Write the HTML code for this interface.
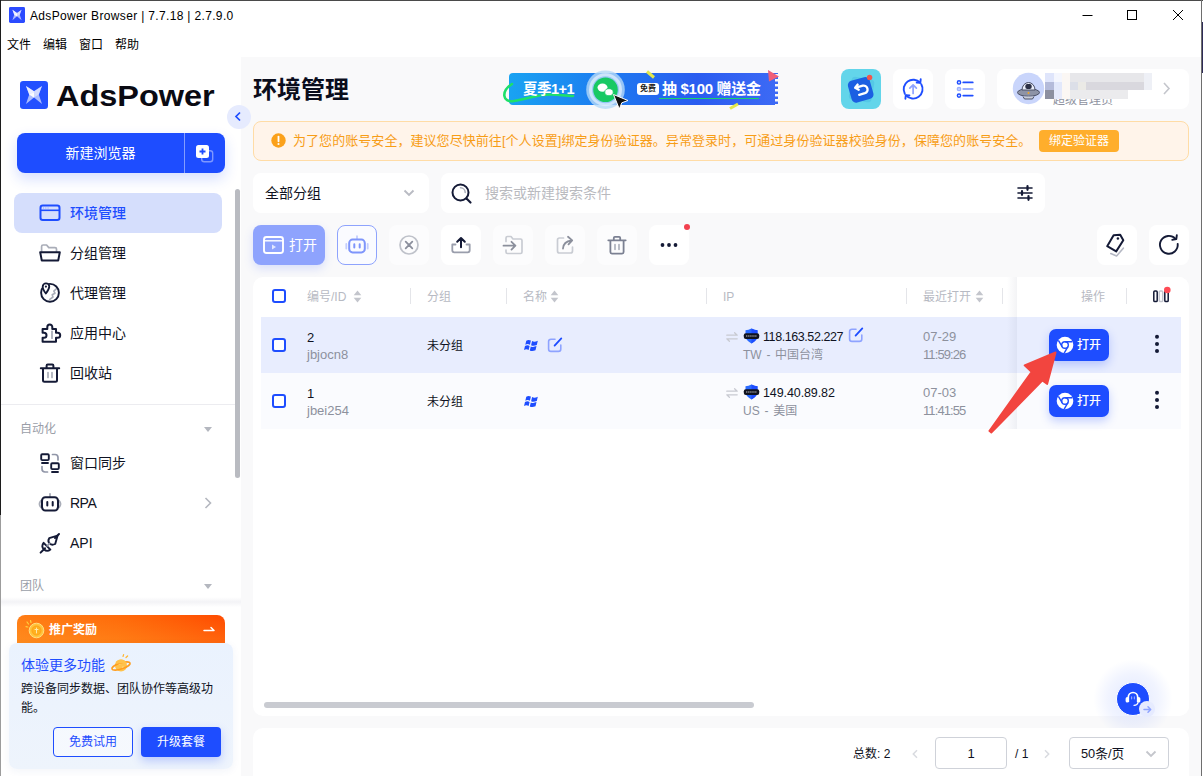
<!DOCTYPE html>
<html lang="zh-CN">
<head>
<meta charset="utf-8">
<title>AdsPower Browser</title>
<style>
*{box-sizing:border-box;margin:0;padding:0}
html,body{width:1203px;height:776px;overflow:hidden;background:#fff}
body{font-family:"Liberation Sans","Noto Sans CJK SC",sans-serif;color:#0f1222;font-size:13px;position:relative}
.abs{position:absolute}
svg{display:block}
/* window chrome */
#win{position:absolute;left:0;top:0;width:1203px;height:776px;overflow:hidden;background:#fff}
#bl{left:0;top:0;width:1px;height:776px;background:linear-gradient(#1c1c1c 0,#1c1c1c 515px,#9c9c9c 515px)}
#bt{left:0;top:0;width:1203px;height:1px;background:#4a4a4a}
#br{left:1201px;top:0;width:1px;height:776px;background:#6e6e6e}
#br2{left:1202px;top:22px;width:1px;height:51px;background:#2e2b57}
#titletxt{left:30px;top:9px;font-size:12px;line-height:15px;color:#000;white-space:nowrap;letter-spacing:.34px}
.menu{top:38px;font-size:12px;line-height:15px;color:#000;white-space:nowrap}
/* sidebar */
#side{left:1px;top:57px;width:240px;height:719px;background:#fff}
#main{left:241px;top:57px;width:960px;height:719px;background:#f9f9fa}
#logotxt{left:56px;top:77px;font-size:29.800px;line-height:38px;font-weight:700;color:#0a0a12;white-space:nowrap;transform:scaleX(1.089);transform-origin:0 50%}
#newbtn{left:17px;top:133px;width:208px;height:40px;border-radius:8px;background:#1e4dff;box-shadow:0 6px 14px rgba(30,77,255,.18)}
#newbtn .t{left:0;top:0;width:167px;height:40px;line-height:40px;text-align:center;color:#fff;font-size:14px}
#newbtn .d{left:167px;top:0;width:1px;height:40px;background:rgba(255,255,255,.45)}
.nav{left:14px;width:208px;height:40px;border-radius:8px}
.nav .t{left:56px;top:0;line-height:40px;font-size:14px;color:#0f1222;white-space:nowrap}
.nav.act{background:#d5defc}
.nav.act .t{color:#1e4dff;font-weight:500}
.nav svg{position:absolute;left:24px;top:8px}
.sect{left:20px;font-size:12px;line-height:16px;color:#9a9ea8}
.caret{width:0;height:0;border-left:4px solid transparent;border-right:4px solid transparent;border-top:5px solid #b4b7bf}

/* promo */
#pshadow{left:1px;top:597px;width:240px;height:10px;background:linear-gradient(#fff,#f3f3f6 50%,#fff)}
#phead{left:17px;top:615px;width:208px;height:36px;border-radius:8px 8px 0 0;background:linear-gradient(180deg,rgba(255,190,60,0) 0%,rgba(255,190,60,.30) 100%),linear-gradient(90deg,#ff7c14 0%,#ff6a0a 50%,#ff4b00 100%)}
#phead .t{left:32px;top:7px;font-size:12px;line-height:16px;font-weight:700;color:#fff}
#pcard{left:9px;top:643px;width:224px;height:126px;border-radius:8px;background:linear-gradient(180deg,#eaf2fe,#eef4fc);box-shadow:0 2px 8px rgba(40,70,160,.06)}
#pcard .h{left:12px;top:12px;font-size:14px;line-height:20px;color:#1e4dff;white-space:nowrap}
#pcard .p{left:12px;top:37px;width:196px;font-size:12px;line-height:18.500px;color:#0f1222}
.pb{top:84px;width:80px;height:30px;border-radius:4px;font-size:12px;line-height:28px;text-align:center}
#pb1{left:44px;border:1px solid #1e4dff;color:#1e4dff;background:rgba(255,255,255,.45)}
#pb2{left:132px;background:#1e4dff;color:#fff;line-height:30px;box-shadow:0 4px 10px rgba(30,77,255,.25)}

/* header */
#ptitle{left:253px;top:73px;font-size:24px;line-height:34px;font-weight:700;color:#0a0d1c;white-space:nowrap}
#collapse{left:227px;top:105px;width:24px;height:24px;border-radius:50%;background:#e6ebfe}
#banner{left:509px;top:73px;width:269px;height:32px;border-radius:4px 0 0 4px;background:linear-gradient(90deg,#19a3f2 0%,#1d7cf0 35%,#2a5cf0 70%,#3d6af5 100%);overflow:visible}
#banner .a{left:14px;top:6px;font-size:14.500px;line-height:20px;font-weight:700;color:#fff;white-space:nowrap;letter-spacing:-.5px}
#banner .b{left:153px;top:5px;font-size:15px;line-height:22px;font-weight:700;color:#fff;white-space:nowrap;letter-spacing:-.3px}
#banner .tag{left:128px;top:10px;width:22px;height:12px;border-radius:3px;background:#fff;color:#1a1a1a;font-size:8px;line-height:12px;text-align:center;font-weight:700}
.hb{top:69px;width:40px;height:40px;border-radius:8px;background:#fff}
#user{left:997px;top:69px;width:192px;height:40px;border-radius:8px;background:#fff;overflow:hidden}
#user .role{left:56px;top:24px;font-size:12px;line-height:14px;color:#8f93a0;white-space:nowrap}
#alert{left:253px;top:121px;width:936px;height:40px;border:1px solid #ffdca6;border-radius:8px;background:#fff4ea}
#alert .t{left:39px;top:0;letter-spacing:.055px;font-size:13px;line-height:38px;color:#f79d16;white-space:nowrap}
#alert .btn{left:785px;top:8px;width:80px;height:22px;border-radius:4px;background:#ffae2c;color:#fff;font-size:12px;line-height:22px;text-align:center}
#sel{left:253px;top:173px;width:176px;height:40px;border-radius:8px;background:#fff}
#sel .t{left:12px;top:0;line-height:40px;font-size:14px;color:#0f1222}
#search{left:441px;top:173px;width:604px;height:40px;border-radius:8px;background:#fff}
#search .t{left:44px;top:0;line-height:40px;font-size:14px;color:#b9babf}
/* toolbar */
.tb{top:225px;width:40px;height:40px;border-radius:8px;background:#fff}
.tb.dis{background:rgba(255,255,255,.55)}
.tb svg{position:absolute;left:8px;top:8px}
#topen{left:253px;top:225px;width:72px;height:40px;border-radius:8px;background:#8ea3fd;box-shadow:0 4px 10px rgba(80,110,255,.18)}
#topen .t{left:36px;top:0;line-height:40px;font-size:14px;color:#fff}

/* table */
#tpanel{left:253px;top:277px;width:936px;height:439px;border-radius:10px;background:#fff;overflow:hidden}
.th{top:287px;font-size:12px;line-height:20px;color:#b7bac3;white-space:nowrap}
.vd{top:288px;width:1px;height:16px;background:#e4e5e9}
.row{left:261px;width:920px;height:56px}
.cb{left:272px;width:14px;height:14px;border:2px solid #1e4dff;border-radius:3px;background:#fff}
.c1{font-size:13px;line-height:18px;color:#0f1222;white-space:nowrap}
.c2{font-size:13px;line-height:18px;color:#8d919d;white-space:nowrap}
.c3{font-size:12px;line-height:18px;color:#0f1222;white-space:nowrap}
.c4{font-size:12px;line-height:18px;color:#8d919d;white-space:nowrap}
.tm{font-size:13px;line-height:18px;color:#8d919d;white-space:nowrap}
.tm2{letter-spacing:-.9px}
.loc{word-spacing:1.400px;margin-top:1px}
.ip{font-size:12.500px;line-height:18px;color:#0f1222;white-space:nowrap;letter-spacing:-.1px}
#fixcol{left:1017px;top:277px;width:172px;height:439px;background:#fff;border-radius:0 10px 10px 0}
#fixsh{left:1007px;top:277px;width:10px;height:152px;background:linear-gradient(90deg,rgba(20,30,70,0),rgba(20,30,70,.05))}
.ob{left:1049px;width:60px;height:32px;border-radius:7px;background:#1e4dff;box-shadow:0 4px 10px rgba(30,77,255,.25)}
.ob .t{left:28px;top:0;line-height:32px;font-size:12px;color:#fff;font-weight:500}
/* footer */
#fpanel{left:253px;top:728px;width:936px;height:60px;border-radius:10px;background:#fff}
.ft{font-size:12px;line-height:18px;color:#0f1222;white-space:nowrap}
.fi{top:737px;height:32px;border:1px solid #cfd2d9;border-radius:4px;background:#fff}
</style>
</head>
<body>
<div id="win">
  <!-- title bar -->
  <div class="abs" id="bt"></div><div class="abs" id="bl"></div><div class="abs" id="br"></div><div class="abs" id="br2"></div>
  <svg class="abs" style="left:9px;top:7px" width="16" height="16" viewBox="0 0 28 28"><rect width="28" height="28" rx="2.500" fill="#2b4bff"/><path d="M6 5L14 10.300L22 5L18.800 13.600L22 23L14 16.400L6 23L9.200 13.600Z" fill="#fff" opacity=".62"/><path d="M6 5L14 10.300L14 16.400L9.200 13.600Z" fill="#fff" opacity=".75"/><path d="M22 5L14 10.300L14 16.400L18.800 13.600Z" fill="#fff" opacity=".45"/><path d="M9.200 13.600L14 11.800L14 16.400Z" fill="#fff" opacity=".8"/></svg>
  <div class="abs" id="titletxt">AdsPower Browser | 7.7.18 | 2.7.9.0</div>
  <svg class="abs" style="left:1080px;top:8px" width="112" height="16" viewBox="0 0 112 16" fill="none" stroke="#000" stroke-width="1"><path d="M2.500 7.500H12.500"/><rect x="47.500" y="2.500" width="9" height="9"/><path d="M93 2L103 12M103 2L93 12"/></svg>
  <div class="abs menu" style="left:7px">文件</div>
  <div class="abs menu" style="left:43px">编辑</div>
  <div class="abs menu" style="left:79px">窗口</div>
  <div class="abs menu" style="left:115px">帮助</div>

  <div class="abs" id="side"></div>
  <div class="abs" id="main"></div>


  <!-- HEADER -->
  <div class="abs" id="ptitle">环境管理</div>
  <div class="abs" id="collapse"><svg class="abs" style="left:7px;top:6px" width="8" height="11" viewBox="0 0 8 11" fill="none" stroke="#1e4dff" stroke-width="1.700"><path d="M6 1.500L2 5.500L6 9.500"/></svg></div>
  <div class="abs" id="banner">
    <svg class="abs" style="left:-12px;top:-6px" width="292" height="46" viewBox="0 0 292 46" fill="none"><path d="M15 17C4 24 5 36 17 34C32 31.500 40 27 56 27.500C64 28 70 29 76 29" stroke="#1de06a" stroke-width="2.600" stroke-linecap="round"/><path d="M162 31.500H262" stroke="#19d46a" stroke-width="1.200"/><path d="M279.500 7V39" stroke="#f9f9fa" stroke-width="3" stroke-dasharray="2.500 2.500"/><circle cx="108.500" cy="22.700" r="19.300" fill="#b5d9f8" opacity=".8"/><circle cx="108.500" cy="22.700" r="15" fill="none" stroke="#e4f1fd" stroke-width="3" opacity=".7"/><circle cx="108.500" cy="22.700" r="12.300" fill="#17c964"/><ellipse cx="105.500" cy="20.600" rx="5" ry="4.200" fill="#fff"/><ellipse cx="112" cy="25.200" rx="4.200" ry="3.500" fill="#fff" stroke="#17c964" stroke-width=".8"/><path d="M116.500 27.500L131 33.500L124.800 35.800L122.300 42Z" fill="#111" stroke="#fff" stroke-width="1"/><path d="M271 3L282 9.500L272 14.500Z" fill="#f0607a"/><path d="M150 4.500L157 10.500" stroke="#e4e84a" stroke-width="3"/><path d="M233 41.500L241 37" stroke="#e4e84a" stroke-width="3"/></svg>
    <div class="abs a">夏季1+1</div>
    <div class="abs tag">免费</div>
    <div class="abs b">抽 $100 赠送金</div>
  </div>
  <div class="abs hb" style="left:841px;background:#63d5ea;overflow:hidden">
    <svg class="abs" style="left:0;top:0" width="40" height="40" viewBox="0 0 40 40"><rect x="9" y="9" width="23" height="23" rx="4" fill="#55c8e6" transform="rotate(10 20 21)"/><rect x="8.500" y="9.500" width="22.500" height="22.500" rx="4.500" fill="#1b5fe2" transform="rotate(-16 20 21)"/><path d="M14.200 18.800L21.800 16.700A3.900 3.900 0 0 1 23.900 24.200L18.200 25.800M14.200 18.800L16.600 15.600M14.200 18.800L17.700 20.700" fill="none" stroke="#fff" stroke-width="2.400" stroke-linecap="round" stroke-linejoin="round"/><circle cx="28.600" cy="8.400" r="2.700" fill="#f2564d"/></svg>
  </div>
  <div class="abs hb" style="left:893px"><svg class="abs" style="left:8px;top:8px" width="24" height="24" viewBox="0 0 24 24" fill="none" stroke="#1e4dff" stroke-width="1.900" stroke-linecap="round" stroke-linejoin="round"><path d="M3.800 16.700A9.500 9.500 0 0 1 19.100 5.700M20.300 7.300A9.500 9.500 0 0 1 5 18.400"/><path d="M19.700 2.300L19.300 5.900L15.700 5.500M4.400 21.700L4.800 18.100L8.400 18.500"/><path d="M12.100 16.500V8M8.800 11.200L12.100 7.900L15.400 11.200" stroke="#8ea3ff" stroke-width="1.700"/></svg></div>
  <div class="abs hb" style="left:945px"><svg class="abs" style="left:8px;top:8px" width="24" height="24" viewBox="0 0 24 24" fill="none" stroke="#1e4dff" stroke-width="1.900" stroke-linecap="round"><path d="M10.300 5.400H19.700M10.300 18.600H19.700"/><path d="M10.300 12H19.700" stroke="#9db0ff"/><circle cx="6" cy="5.400" r="1.600" stroke-width="1.500"/><circle cx="6" cy="12" r="1.600" stroke-width="1.500" stroke="#9db0ff" fill="#dfe5ff"/><circle cx="6" cy="18.600" r="1.600" stroke-width="1.500"/></svg></div>
  <div class="abs" id="user">
    <div class="abs role">超级管理员</div>
    <svg class="abs" style="left:0;top:0" width="192" height="40" viewBox="0 0 192 40"><circle cx="31.500" cy="19.500" r="15.700" fill="#c9d5fb"/><ellipse cx="31.500" cy="23.500" rx="11" ry="3.800" fill="#8d93a6" stroke="#4b5066" stroke-width="1"/><path d="M25 21A6.500 7.500 0 0 1 38 21Z" fill="#e9edf8" stroke="#4b5066" stroke-width="1"/><rect x="28.300" y="15" width="6.400" height="5" rx="2" fill="#2b2f45"/><path d="M26 27.500L27.500 30H35.500L37 27.500" fill="#c8ccd8" stroke="#4b5066" stroke-width="1"/><circle cx="31.500" cy="24" r="1" fill="#f5a623"/>
      <g shape-rendering="crispEdges"><rect x="48" y="4" width="107" height="26" fill="#f6f6f8"/><rect x="48" y="4" width="9" height="9" fill="#dfe5fb"/><rect x="48" y="13" width="9" height="8" fill="#b4bbda"/><rect x="48" y="21" width="9" height="9" fill="#8d90a0"/><rect x="57" y="4" width="8" height="9" fill="#f4f6fe"/><rect x="57" y="13" width="8" height="8" fill="#e2e8fb"/><rect x="57" y="21" width="8" height="9" fill="#e6eafb"/><rect x="65" y="4" width="8" height="26" fill="#fbf7f4"/><rect x="73" y="4" width="74" height="9" fill="#e7e7ea"/><rect x="73" y="13" width="16" height="8" fill="#dcdfe8"/><rect x="81" y="13" width="8" height="8" fill="#ebeae6"/><rect x="89" y="13" width="58" height="8" fill="#d9d8de"/><rect x="73" y="21" width="58" height="9" fill="#ebebed"/><rect x="131" y="21" width="24" height="9" fill="#fff"/><rect x="147" y="4" width="8" height="17" fill="#eef0f6"/></g>
      <path d="M167 14L172 19.500L167 25" fill="none" stroke="#c4c6cc" stroke-width="1.600"/></svg>
  </div>
  <div class="abs" id="alert">
    <svg class="abs" style="left:17px;top:11px" width="15" height="15" viewBox="0 0 15 15"><circle cx="7.500" cy="7.500" r="7.200" fill="#fba11b"/><path d="M7.500 3.600V8.300" stroke="#fff" stroke-width="1.800" stroke-linecap="round"/><circle cx="7.500" cy="11" r="1.050" fill="#fff"/></svg>
    <div class="abs t">为了您的账号安全，建议您尽快前往[个人设置]绑定身份验证器。异常登录时，可通过身份验证器校验身份，保障您的账号安全。</div>
    <div class="abs btn">绑定验证器</div>
  </div>
  <div class="abs" id="sel"><div class="abs t">全部分组</div><svg class="abs" style="left:150px;top:16px" width="12" height="8" viewBox="0 0 12 8" fill="none" stroke="#b9bbc3" stroke-width="1.900"><path d="M1.500 1.500L6 6L10.500 1.500"/></svg></div>
  <div class="abs" id="search"><svg class="abs" style="left:9px;top:9px" width="24" height="24" viewBox="0 0 24 24" fill="none" stroke-linecap="round"><circle cx="10.500" cy="10.500" r="8" stroke="#141a36" stroke-width="2"/><path d="M16.500 16.500L20.500 20.500" stroke="#141a36" stroke-width="2.200"/><path d="M10.500 5.800A4.700 4.700 0 0 1 15.200 10.500" stroke="#a9adb8" stroke-width="1.500"/></svg><div class="abs t">搜索或新建搜索条件</div>
    <svg class="abs" style="left:575px;top:11px" width="18" height="18" viewBox="0 0 18 18" fill="none" stroke="#141a36" stroke-width="1.600" stroke-linecap="round"><path d="M2 4H16M2 9H16M2 14H16"/><path d="M11.500 2.200V5.800M6 7.200V10.800M12.500 12.200V15.800" stroke-width="2.200"/></svg></div>
  <!-- TOOLBAR -->
  <div class="abs" id="topen"><svg class="abs" style="left:9px;top:9px" width="24" height="22" viewBox="0 0 24 22" fill="none" stroke="#fff" stroke-width="1.900" stroke-linejoin="round"><rect x="2" y="3" width="19" height="16" rx="2.500"/><path d="M2 6.800H21" stroke-width="1.400"/><path d="M10 10.500L14 13L10 15.500Z" fill="#fff" stroke="none" opacity=".75"/></svg><div class="abs t">打开</div></div>
  <div class="abs tb" style="left:337px;border:1px solid #8ea3fd;background:#fafbff"><svg style="left:7px;top:7px" width="24" height="24" viewBox="0 0 24 24" fill="none" stroke-linejoin="round" stroke-linecap="round"><path d="M1.300 11V15.500M22.700 11V15.500M12 3.200V6" stroke="#c3cdfd" stroke-width="1.800"/><rect x="4.200" y="6.600" width="15.600" height="12.800" rx="3.400" stroke="#7e95fb" stroke-width="2"/><path d="M9.300 11.200V14.600M14.700 11.200V14.600" stroke="#7e95fb" stroke-width="2"/></svg></div>
  <div class="abs tb dis" style="left:389px"><svg width="24" height="24" viewBox="0 0 24 24" fill="none" stroke="#bfc2ca" stroke-width="1.700" stroke-linecap="round"><circle cx="12" cy="12" r="9"/><path d="M8.700 8.700L15.300 15.300M15.300 8.700L8.700 15.300" stroke="#8b8f9c" stroke-width="1.800"/></svg></div>
  <div class="abs tb" style="left:441px"><svg width="24" height="24" viewBox="0 0 24 24" fill="none" stroke-linecap="round" stroke-linejoin="round"><path d="M3.300 11.500V17.300Q3.300 19.300 5.300 19.300H18.700Q20.700 19.300 20.700 17.300V11.500H17.500M3.300 11.500H6.500" stroke="#9a9eac" stroke-width="1.800"/><path d="M12 14.300V5.500M8.200 8.800L12 5L15.800 8.800" stroke="#141a36" stroke-width="2"/></svg></div>
  <div class="abs tb dis" style="left:493px"><svg width="24" height="24" viewBox="0 0 24 24" fill="none" stroke-linecap="round" stroke-linejoin="round"><path d="M5 8.500V5Q5 3.500 6.500 3.500H10L12 6H19.500Q21 6 21 7.500V19Q21 20.500 19.500 20.500H6.500Q5 20.500 5 19V17" stroke="#c9ccd3" stroke-width="1.700"/><path d="M2.500 12.700H14M10.500 8.800L14.400 12.700L10.500 16.600" stroke="#8b8f9c" stroke-width="1.800"/></svg></div>
  <div class="abs tb dis" style="left:545px"><svg width="24" height="24" viewBox="0 0 24 24" fill="none" stroke-linecap="round" stroke-linejoin="round"><path d="M10.500 5H6.500Q4.500 5 4.500 7V18Q4.500 20 6.500 20H17.500Q19.500 20 19.500 18V14" stroke="#c9ccd3" stroke-width="1.700"/><path d="M10 15.500Q10.500 8.500 18.500 7.500M15 3.800L19.200 7.400L15.500 11.300" stroke="#8b8f9c" stroke-width="1.800"/></svg></div>
  <div class="abs tb dis" style="left:597px"><svg width="24" height="24" viewBox="0 0 24 24" fill="none" stroke-linejoin="round" stroke-linecap="round"><path d="M10 11.500V16.500M14 11.500V16.500" stroke="#a9adb8" stroke-width="1.600"/><path d="M3.300 7.300H20.700M8.800 7V4.900Q8.800 3.800 9.900 3.800H14.100Q15.200 3.800 15.200 4.900V7M5.400 7.500V19.100Q5.400 20.600 6.900 20.600H17.100Q18.600 20.600 18.600 19.100V7.500" stroke="#7b8092" stroke-width="1.800"/></svg></div>
  <div class="abs tb" style="left:649px"><svg width="24" height="24" viewBox="0 0 24 24" fill="#141a36"><circle cx="5.500" cy="12" r="1.900"/><circle cx="12" cy="12" r="1.900"/><circle cx="18.500" cy="12" r="1.900"/></svg></div>
  <div class="abs" style="left:684px;top:224px;width:6px;height:6px;border-radius:50%;background:#f2414f"></div>
  <div class="abs tb" style="left:1097px"><svg width="24" height="24" viewBox="0 0 24 24" fill="none" stroke-linejoin="round" stroke-linecap="round"><path d="M5.800 20.600L11.600 23L18.300 15.200" stroke="#b4b7c3" stroke-width="1.600"/><path d="M8.600 2.200L15.200 1.800L18.300 7.200L11.200 18.400L2.200 13.200Z" stroke="#141a36" stroke-width="2"/><circle cx="12.900" cy="5.600" r="1.250" fill="#141a36"/></svg></div>
  <div class="abs tb" style="left:1149px"><svg width="24" height="24" viewBox="0 0 24 24" fill="none" stroke="#141a36" stroke-width="1.900" stroke-linecap="round" stroke-linejoin="round"><path d="M20.700 10.900A8.900 8.900 0 1 1 18.500 5.900"/><path d="M15.200 6.900L19.300 6L19.800 2.300"/></svg></div>

  <!-- TABLE -->
  <div class="abs" id="tpanel"></div>
  <div class="abs cb" style="top:289px"></div>
  <div class="abs th" style="left:307px">编号/ID</div><svg class="abs" style="left:353px;top:290px" width="9" height="13" viewBox="0 0 9 13" fill="#c3c5cc"><path d="M4.500 .6L8.300 5.200H.7Z"/><path d="M4.500 12.400L8.300 7.800H.7Z"/></svg>
  <div class="abs vd" style="left:410px"></div>
  <div class="abs th" style="left:427px">分组</div>
  <div class="abs vd" style="left:506px"></div>
  <div class="abs th" style="left:523px">名称</div><svg class="abs" style="left:550px;top:290px" width="9" height="13" viewBox="0 0 9 13" fill="#c3c5cc"><path d="M4.500 .6L8.300 5.200H.7Z"/><path d="M4.500 12.400L8.300 7.800H.7Z"/></svg>
  <div class="abs vd" style="left:706px"></div>
  <div class="abs th" style="left:723px">IP</div>
  <div class="abs vd" style="left:906px"></div>
  <div class="abs th" style="left:923px">最近打开</div><svg class="abs" style="left:975px;top:290px" width="9" height="13" viewBox="0 0 9 13" fill="#c3c5cc"><path d="M4.500 .6L8.300 5.200H.7Z"/><path d="M4.500 12.400L8.300 7.800H.7Z"/></svg>
  <div class="abs vd" style="left:1002px"></div>
  <div class="abs row" style="top:317px;background:#e8edfe"></div>
  <div class="abs cb" style="top:338px"></div>
  <div class="abs c1" style="left:307px;top:329px">2</div><div class="abs c2" style="left:307px;top:346px">jbjocn8</div>
  <div class="abs c3" style="left:427px;top:337px">未分组</div>
  <svg class="abs" style="left:524px;top:339px" width="15" height="13" viewBox="0 0 15 13" fill="#1e4dff"><path d="M2.300 1.700Q4.500 .3 6.900 1.600L5.900 5.700Q3.600 4.400 1.300 5.800Z"/><path d="M8.100 2.100Q10.400 3.300 13.800 1.800L12.800 5.900Q9.600 7.400 7.100 6.200Z"/><path d="M1 7Q3.300 5.600 5.600 6.900L4.600 11Q2.300 9.700 0 11.100Z"/><path d="M6.800 7.400Q9.200 8.600 12.500 7.100L11.500 11.200Q8.300 12.700 5.800 11.500Z"/></svg>
  <svg class="abs" style="left:547px;top:337px" width="16" height="16" viewBox="0 0 16 16" fill="none" stroke-linecap="round" stroke-linejoin="round"><path d="M8 2.200H4Q1.600 2.200 1.600 4.600V12Q1.600 14.400 4 14.400H11.400Q13.800 14.400 13.800 12V8" stroke="#8ea3ff" stroke-width="1.600"/><path d="M7.600 8.600L14.300 1.400" stroke="#1e4dff" stroke-width="1.800"/></svg>
  <svg class="abs" style="left:726px;top:332px" width="12" height="10" viewBox="0 0 12 10" fill="none" stroke="#c8cad1" stroke-width="1.300" stroke-linecap="round" stroke-linejoin="round"><path d="M.8 3.200H11.200L8.600 .8M11.200 6.800H.8L3.400 9.200"/></svg>
  <svg class="abs" style="left:743px;top:328px" width="17" height="16" viewBox="0 0 17 16"><path d="M8.500 .6Q11.500 2.200 14.500 2.300V8Q14.500 12.500 8.500 15.400Q2.500 12.500 2.500 8V2.300Q5.500 2.200 8.500 .6Z" fill="#2a6bff"/><path d="M8.500 .6Q11.500 2.200 14.500 2.300V8Q14.500 12.500 8.500 15.400Z" fill="#1e4dff"/><rect x=".8" y="5.300" width="15.400" height="5.600" rx="2" fill="#10131f"/><path d="M3 8H14" stroke="#fff" stroke-width=".9" stroke-dasharray="1.400 .7" opacity=".85"/></svg>
  <div class="abs ip" style="left:763px;top:328px;letter-spacing:-.42px">118.163.52.227</div>
  <svg class="abs" style="left:848px;top:327px" width="16" height="16" viewBox="0 0 16 16" fill="none" stroke-linecap="round" stroke-linejoin="round"><path d="M8 2.200H4Q1.600 2.200 1.600 4.600V12Q1.600 14.400 4 14.400H11.400Q13.800 14.400 13.800 12V8" stroke="#8ea3ff" stroke-width="1.600"/><path d="M7.600 8.600L14.300 1.400" stroke="#1e4dff" stroke-width="1.800"/></svg>
  <div class="abs c4 loc" style="left:743px;top:345px">TW - 中国台湾</div>
  <div class="abs tm" style="left:923px;top:328px">07-29</div><div class="abs tm tm2" style="left:923px;top:346px">11:59:26</div>

  <div class="abs row" style="top:373px;background:#fafbfe"></div>
  <div class="abs cb" style="top:394px"></div>
  <div class="abs c1" style="left:307px;top:385px">1</div><div class="abs c2" style="left:307px;top:402px">jbei254</div>
  <div class="abs c3" style="left:427px;top:393px">未分组</div>
  <svg class="abs" style="left:524px;top:395px" width="15" height="13" viewBox="0 0 15 13" fill="#1e4dff"><path d="M2.300 1.700Q4.500 .3 6.900 1.600L5.900 5.700Q3.600 4.400 1.300 5.800Z"/><path d="M8.100 2.100Q10.400 3.300 13.800 1.800L12.800 5.900Q9.600 7.400 7.100 6.200Z"/><path d="M1 7Q3.300 5.600 5.600 6.900L4.600 11Q2.300 9.700 0 11.100Z"/><path d="M6.800 7.400Q9.200 8.600 12.500 7.100L11.500 11.200Q8.300 12.700 5.800 11.500Z"/></svg>
  <svg class="abs" style="left:726px;top:388px" width="12" height="10" viewBox="0 0 12 10" fill="none" stroke="#c8cad1" stroke-width="1.300" stroke-linecap="round" stroke-linejoin="round"><path d="M.8 3.200H11.200L8.600 .8M11.200 6.800H.8L3.400 9.200"/></svg>
  <svg class="abs" style="left:743px;top:384px" width="17" height="16" viewBox="0 0 17 16"><path d="M8.500 .6Q11.500 2.200 14.500 2.300V8Q14.500 12.500 8.500 15.400Q2.500 12.500 2.500 8V2.300Q5.500 2.200 8.500 .6Z" fill="#2a6bff"/><path d="M8.500 .6Q11.500 2.200 14.500 2.300V8Q14.500 12.500 8.500 15.400Z" fill="#1e4dff"/><rect x=".8" y="5.300" width="15.400" height="5.600" rx="2" fill="#10131f"/><path d="M3 8H14" stroke="#fff" stroke-width=".9" stroke-dasharray="1.400 .7" opacity=".85"/></svg>
  <div class="abs ip" style="left:763px;top:384px">149.40.89.82</div>
  <div class="abs c4 loc" style="left:743px;top:401px">US - 美国</div>
  <div class="abs tm" style="left:923px;top:384px">07-03</div><div class="abs tm tm2" style="left:923px;top:402px">11:41:55</div>

  <div class="abs" id="fixsh"></div>
  <div class="abs" id="fixcol"></div>
  <div class="abs th" style="left:1081px">操作</div>
  <div class="abs vd" style="left:1126px"></div>
  <svg class="abs" style="left:1152px;top:286px" width="20" height="18" viewBox="0 0 20 18" fill="none" stroke="#141a36" stroke-width="1.500"><rect x="1.800" y="5" width="3.400" height="10.600" rx="1.100"/><rect x="7.300" y="5" width="3.400" height="10.600" rx="1.100" stroke="#c5c7d0"/><rect x="12.800" y="5" width="3.400" height="10.600" rx="1.100"/><circle cx="15.300" cy="4" r="3.300" fill="#ff4b55" stroke="none"/></svg>
  <div class="abs" style="left:1017px;top:317px;width:164px;height:56px;background:#e8edfe"></div>
  <div class="abs ob" style="top:329px"><svg class="abs" style="left:7px;top:7px" width="18" height="18" viewBox="0 0 18 18"><circle cx="9" cy="9" r="8.300" fill="#fff"/><circle cx="9" cy="9" r="3.300" fill="none" stroke="#1e4dff" stroke-width="1.400"/><path d="M9 5.700H16.400M6.100 10.700L2.400 4.300M11.900 10.700L8.200 17.100" stroke="#1e4dff" stroke-width="1.400" fill="none"/></svg><div class="abs t">打开</div></div>
  <svg class="abs" style="left:1154px;top:334px" width="6" height="20" viewBox="0 0 6 20" fill="#141a36"><circle cx="3" cy="2.700" r="2"/><circle cx="3" cy="9.900" r="2"/><circle cx="3" cy="17.100" r="2"/></svg>

  <div class="abs" style="left:1017px;top:373px;width:164px;height:56px;background:#fafbfe"></div>
  <div class="abs ob" style="top:385px"><svg class="abs" style="left:7px;top:7px" width="18" height="18" viewBox="0 0 18 18"><circle cx="9" cy="9" r="8.300" fill="#fff"/><circle cx="9" cy="9" r="3.300" fill="none" stroke="#1e4dff" stroke-width="1.400"/><path d="M9 5.700H16.400M6.100 10.700L2.400 4.300M11.900 10.700L8.200 17.100" stroke="#1e4dff" stroke-width="1.400" fill="none"/></svg><div class="abs t">打开</div></div>
  <svg class="abs" style="left:1154px;top:390px" width="6" height="20" viewBox="0 0 6 20" fill="#141a36"><circle cx="3" cy="2.700" r="2"/><circle cx="3" cy="9.900" r="2"/><circle cx="3" cy="17.100" r="2"/></svg>

  <div class="abs" style="left:264px;top:702px;width:490px;height:6px;border-radius:3px;background:#c9cbd1"></div>
  <svg class="abs" style="left:980px;top:340px" width="80" height="100" viewBox="980 340 80 100"><path d="M1055.600 352.400L1047.200 384L1042.300 380.600L991.300 432.600L989.300 430.900L1031.500 371.900L1024.600 365.400Z" fill="#f2453f" stroke="#f2453f" stroke-width="1.800" stroke-linejoin="round"/></svg>
  <!-- support -->
  <div class="abs" style="left:1093px;top:659px;width:80px;height:80px;border-radius:50%;background:radial-gradient(circle,rgba(120,150,255,.22) 0%,rgba(120,150,255,.10) 45%,rgba(120,150,255,0) 70%)"></div>
  <div class="abs" style="left:1116px;top:682px;width:34px;height:34px;border-radius:50%;background:#1e4dff;border:1px solid #fff">
    <svg class="abs" style="left:6px;top:6px" width="20" height="20" viewBox="0 0 20 20" fill="none"><path d="M5.300 13V8.200A4.700 4.700 0 0 1 14.700 8.200V13" stroke="#fff" stroke-width="1.700"/><rect x="2.600" y="8" width="3.400" height="5.600" rx="1.700" fill="#fff"/><rect x="14" y="8" width="3.400" height="5.600" rx="1.700" fill="#fff"/><path d="M8.600 7.800V9.800M11.400 7.800V9.800" stroke="#8ea3ff" stroke-width="1.200" stroke-linecap="round"/><path d="M15 13.500Q14.500 16.300 11 16.300" stroke="#fff" stroke-width="1.300" stroke-linecap="round"/></svg>
  </div>
  <div class="abs" style="left:1139px;top:701px;width:16px;height:16px;border-radius:50%;background:#e6ebff"><svg class="abs" style="left:3.500px;top:3.500px" width="9" height="9" viewBox="0 0 9 9" fill="none" stroke="#8ea3ff" stroke-width="1.500" stroke-linecap="round" stroke-linejoin="round"><path d="M1 4.500H7.500M5 1.800L7.700 4.500L5 7.200"/></svg></div>
  <!-- FOOTER -->
  <div class="abs" id="fpanel"></div>
  <div class="abs ft" style="left:853px;top:745px">总数: 2</div>
  <svg class="abs" style="left:911px;top:749px" width="8" height="10" viewBox="0 0 8 10" fill="none" stroke="#d9dbe0" stroke-width="1.500"><path d="M6 1.300L2.300 5L6 8.700"/></svg>
  <div class="abs fi" style="left:935px;width:72px"></div>
  <div class="abs ft" style="left:935px;top:745px;width:72px;text-align:center;font-size:13px">1</div>
  <div class="abs ft" style="left:1015px;top:745px">/ 1</div>
  <svg class="abs" style="left:1043px;top:749px" width="8" height="10" viewBox="0 0 8 10" fill="none" stroke="#d9dbe0" stroke-width="1.500"><path d="M2 1.300L5.700 5L2 8.700"/></svg>
  <div class="abs fi" style="left:1069px;width:100px"></div>
  <div class="abs ft" style="left:1081px;top:745px;font-size:12.800px">50条/页</div>
  <svg class="abs" style="left:1145px;top:750px" width="12" height="8" viewBox="0 0 12 8" fill="none" stroke="#c4c6cc" stroke-width="1.800"><path d="M1.500 1.500L6 6L10.500 1.500"/></svg>
  <!-- SIDEBAR -->
  <svg class="abs" style="left:20px;top:81px" width="28" height="28" viewBox="0 0 28 28"><rect width="28" height="28" rx="3.200" fill="#2350ff"/><path d="M6 5L14 10.300L22 5L18.800 13.600L22 23L14 16.400L6 23L9.200 13.600Z" fill="#fff" opacity=".62"/><path d="M6 5L14 10.300L14 16.400L9.200 13.600Z" fill="#fff" opacity=".75"/><path d="M22 5L14 10.300L14 16.400L18.800 13.600Z" fill="#fff" opacity=".45"/><path d="M9.200 13.600L14 11.800L14 16.400Z" fill="#fff" opacity=".8"/></svg>
  <div class="abs" id="logotxt">AdsPower</div>

  <div class="abs" id="newbtn"><div class="abs t">新建浏览器</div><div class="abs d"></div>
    <svg class="abs" style="left:178px;top:11px" width="20" height="20" viewBox="0 0 20 20"><rect x="6.700" y="6.700" width="11" height="11" rx="2.500" fill="none" stroke="#7d97ff" stroke-width="1.400"/><rect x="1" y="1" width="13" height="13" rx="2.500" fill="#fff"/><path d="M7.500 4.500V10.500M4.500 7.500H10.500" stroke="#1e4dff" stroke-width="1.800"/></svg>
  </div>

  <div class="abs nav act" style="top:193px"><svg width="24" height="24" viewBox="0 0 24 24" fill="none" stroke="#1e4dff" stroke-width="2"><rect x="2.500" y="4.600" width="19" height="14.400" rx="2.300"/><path d="M2.500 9.300H21.500" stroke-width="1.600"/><path d="M5 7H6M7.300 7H8.300M9.600 7H10.600" stroke-width="1" stroke="#8ea2ff"/></svg><div class="abs t">环境管理</div></div>
  <div class="abs nav" style="top:233px"><svg width="24" height="24" viewBox="0 0 24 24" fill="none" stroke-linejoin="round" stroke-linecap="round"><path d="M3.600 10.500V5.500Q3.600 4 5.100 4H8.600L10.800 6.600H17Q18.500 6.600 18.500 8.100V10.500" stroke="#a9adb8" stroke-width="1.700"/><path d="M2.200 11.200H21.800L20.200 19.600H3.800Z" stroke="#141a36" stroke-width="2"/></svg><div class="abs t">分组管理</div></div>
  <div class="abs nav" style="top:273px"><svg width="24" height="24" viewBox="0 0 24 24" fill="none" stroke-linecap="round" stroke-linejoin="round"><path d="M18 8.200L15.800 10.200L17 12.200L14.200 13.800L15 16L11.800 18.400" stroke="#a9adb8" stroke-width="1.600"/><circle cx="12" cy="11.800" r="8.900" stroke="#141a36" stroke-width="1.900"/><path d="M7.900 12.500C5.900 9.900 4.700 8 4.700 5.700A3.300 3.300 0 0 1 11.300 5.700C11.100 8 9.900 9.900 7.900 12.500Z" stroke="#141a36" stroke-width="1.800" fill="#fff"/><circle cx="7.900" cy="5.600" r="1.100" fill="#141a36"/></svg><div class="abs t">代理管理</div></div>
  <div class="abs nav" style="top:313px"><svg width="24" height="24" viewBox="0 0 24 24" fill="none" stroke-linejoin="round" stroke-linecap="round"><path d="M14 10.300V17.200" stroke="#a9adb8" stroke-width="1.800"/><path d="M4.600 8H9.300V6A2.500 2.500 0 0 1 14.300 6V8H18V11.700H19.700A2.500 2.500 0 0 1 19.700 16.700H18V20.700H4.600V16.700H6A2.500 2.500 0 0 0 6 11.700H4.600Z" stroke="#141a36" stroke-width="2"/></svg><div class="abs t">应用中心</div></div>
  <div class="abs nav" style="top:353px"><svg width="24" height="24" viewBox="0 0 24 24" fill="none" stroke-linejoin="round" stroke-linecap="round"><path d="M10 11.500V16.500M14 11.500V16.500" stroke="#a9adb8" stroke-width="1.700"/><path d="M2.800 7.300H21.200M8.600 7V4.700Q8.600 3.600 9.700 3.600H14.300Q15.400 3.600 15.400 4.700V7M5 7.500V19.300Q5 20.800 6.500 20.800H17.500Q19 20.800 19 19.300V7.500" stroke="#141a36" stroke-width="2"/></svg><div class="abs t">回收站</div></div>
  <div class="abs" style="left:1px;top:404px;width:234px;height:1px;background:#ececf0"></div>
  <div class="abs sect" style="top:421px">自动化</div>
  <div class="abs caret" style="left:204px;top:427px"></div>
  <div class="abs nav" style="top:443px"><svg width="24" height="24" viewBox="0 0 24 24" fill="none" stroke-linejoin="round" stroke-linecap="round"><path d="M14.500 3.500H17Q20 3.500 20 6.500V9M9.500 21H7Q4 21 4 18V15.500" stroke="#9196a8" stroke-width="1.700"/><rect x="3.200" y="3.300" width="7.600" height="5.800" rx="1" stroke="#141a36" stroke-width="1.900"/><path d="M4 12H10" stroke="#141a36" stroke-width="1.900"/><rect x="13.200" y="12.300" width="7.600" height="5.800" rx="1" stroke="#141a36" stroke-width="1.900"/><path d="M14 21H20" stroke="#141a36" stroke-width="1.900"/></svg><div class="abs t">窗口同步</div></div>
  <div class="abs nav" style="top:483px"><svg width="24" height="24" viewBox="0 0 24 24" fill="none" stroke-linejoin="round" stroke-linecap="round"><path d="M3 9.600Q0 13 3 16.400M21 9.600Q24 13 21 16.400M12 2.800V6" stroke="#a9adb8" stroke-width="1.800"/><rect x="4" y="6.300" width="16" height="13.200" rx="3.400" stroke="#141a36" stroke-width="2"/><path d="M9.300 11V14.500M14.700 11V14.500" stroke="#141a36" stroke-width="2"/></svg><div class="abs t" style="letter-spacing:-.5px">RPA</div></div>
  <div class="abs nav" style="top:523px"><svg width="24" height="24" viewBox="0 0 24 24" fill="none" stroke-linejoin="round" stroke-linecap="round"><path d="M2.600 21.600L7 17.200M17 7L21 3" stroke="#141a36" stroke-width="2"/><path d="M5.600 11.800L12.400 18.600Q9 21.300 5.900 18.300Q2.900 15.200 5.600 11.800Z" stroke="#141a36" stroke-width="1.900"/><path d="M11.200 7.200L19.600 4.600L17.200 13Q13.800 14.600 11.600 12.400Q9.400 10.200 11.200 7.200Z" stroke="#141a36" stroke-width="1.900"/><path d="M9.200 14.800L11.600 12.400" stroke="#9196a8" stroke-width="1.800"/></svg><div class="abs t">API</div></div>
  <svg class="abs" style="left:203px;top:496px" width="10" height="14" viewBox="0 0 10 14" fill="none" stroke="#b4b7bf" stroke-width="1.600"><path d="M2.500 2L7.500 7L2.500 12"/></svg>
  <div class="abs sect" style="top:578px">团队</div>
  <div class="abs caret" style="left:204px;top:584px"></div>

  <div class="abs" id="pshadow"></div>
  <div class="abs" id="phead">
    <svg class="abs" style="left:8px;top:4px" width="22" height="22" viewBox="0 0 22 22"><path d="M3.500 5L2 3M6 3.500L5.500 1.500M2.800 8L1 7.600" stroke="#ffd23e" stroke-width="1.200" stroke-linecap="round"/><circle cx="11.500" cy="11.500" r="7.300" fill="#ffc53d" stroke="#ffdf80" stroke-width="1"/><circle cx="11.500" cy="11.500" r="4.600" fill="#ffb01f" stroke="#ff9c12" stroke-width=".8"/><path d="M11.500 9V14M10 10.500H13" stroke="#ffe9a8" stroke-width="1" stroke-linecap="round"/></svg>
    <div class="abs t">推广奖励</div>
    <svg class="abs" style="left:186px;top:9px" width="12" height="10" viewBox="0 0 12 10" fill="none" stroke="#fff" stroke-width="1.500" stroke-linecap="round" stroke-linejoin="round"><path d="M1 6.500H11L8 3.500"/></svg>
  </div>
  <div class="abs" id="pcard">
    <div class="abs h">体验更多功能</div>
    <svg class="abs" style="left:101px;top:10px" width="22" height="22" viewBox="0 0 22 22"><path d="M13 3.500L13.600 1.600M16 4.500L17.600 3" stroke="#ffb52e" stroke-width="1.200" stroke-linecap="round"/><circle cx="11" cy="12.500" r="6" fill="#ffc24a"/><circle cx="9" cy="10.500" r="1.500" fill="#ffdf9a"/><circle cx="13" cy="14.500" r="1.100" fill="#ffdf9a"/><ellipse cx="11" cy="13" rx="9.500" ry="3" fill="none" stroke="#ff9d1e" stroke-width="1.600" transform="rotate(-18 11 13)"/><path d="M5.300 10.600A6 6 0 0 1 16.700 10.600" fill="#ffc24a"/></svg>
    <div class="abs p">跨设备同步数据、团队协作等高级功能。</div>
    <div class="abs pb" id="pb1">免费试用</div>
    <div class="abs pb" id="pb2">升级套餐</div>
  </div>
  <div class="abs" style="left:235px;top:189px;width:5px;height:289px;border-radius:3px;background:#b9bbc1"></div>
</div>
</body>
</html>
